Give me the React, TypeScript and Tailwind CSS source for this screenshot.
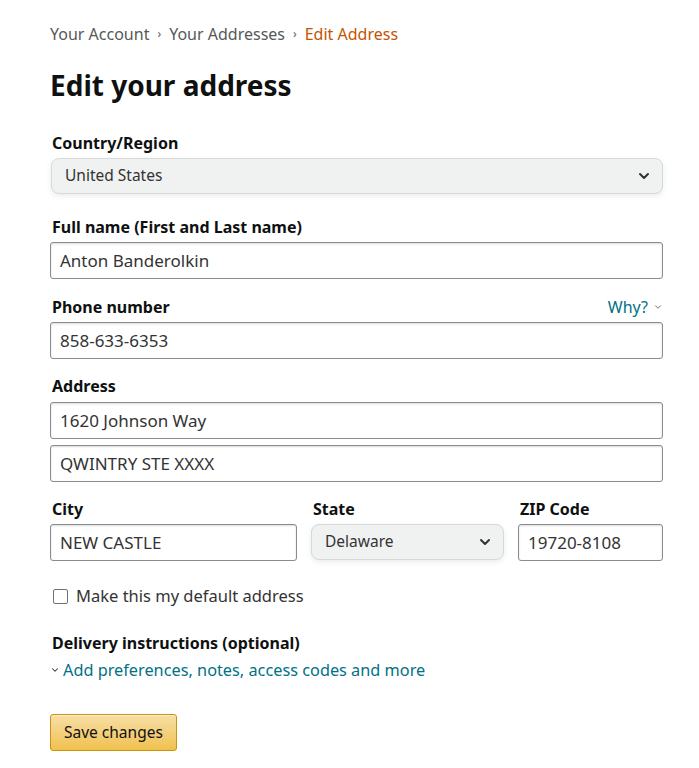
import { ChevronDown } from "lucide-react";

const font = "font-['Noto_Sans',_'Liberation_Sans',_sans-serif]";

function Label({ children }: { children: React.ReactNode }) {
  return (
    <div className="text-[16px] font-bold leading-5 text-[#0f1111] pl-[2px]">{children}</div>
  );
}

function TextBox({ value }: { value: string }) {
  return (
    <div className="flex h-[37px] items-center rounded-[3px] border border-[#888c8c] bg-white px-[9px] text-[17px] text-[#333] shadow-[inset_0_1px_2px_rgba(15,17,17,0.15)]">
      {value}
    </div>
  );
}

function SelectBox({ value }: { value: string }) {
  return (
    <div className="flex h-[36px] items-center justify-between rounded-lg border border-[#d5d9d9] bg-[#f0f2f2] pl-[13px] pr-[10px] text-[15.5px] text-[#333] shadow-[0_2px_5px_rgba(213,217,217,0.5)]">
      <span>{value}</span>
      <ChevronDown size={16} strokeWidth={3} className="text-[#333]" />
    </div>
  );
}

export default function App() {
  return (
    <div className={`${font} min-h-[768px] bg-white px-[50px] pt-[24px] text-[#0f1111]`}>
      {/* Breadcrumb */}
      <nav className="flex items-center text-[16px] leading-5 text-[#565959]">
        <span>Your Account</span>
        <span className="mx-[8px] text-[12px]">›</span>
        <span>Your Addresses</span>
        <span className="mx-[8px] text-[12px]">›</span>
        <span className="text-[#c45500]">Edit Address</span>
      </nav>

      <h1 className="mt-[25px] text-[28px] font-bold leading-8">Edit your address</h1>

      <div className="mt-[32px] w-[613px]">
        <Label>Country/Region</Label>
        <div className="mt-[5px] pl-[1px]">
          <SelectBox value="United States" />
        </div>

        <div className="mt-[23px]">
          <Label>Full name (First and Last name)</Label>
          <div className="mt-[5px]">
            <TextBox value="Anton Banderolkin" />
          </div>
        </div>

        <div className="mt-[18px]">
          <div className="flex h-5 items-center justify-between">
            <Label>Phone number</Label>
            <span className="flex items-center gap-[5px] text-[16px] leading-5 text-[#007185]">
              Why?
              <ChevronDown size={10} strokeWidth={2} className="text-[#565959]" />
            </span>
          </div>
          <div className="mt-[5px]">
            <TextBox value="858-633-6353" />
          </div>
        </div>

        <div className="mt-[17px]">
          <Label>Address</Label>
          <div className="mt-[6px] flex flex-col gap-[6px]">
            <TextBox value="1620 Johnson Way" />
            <TextBox value="QWINTRY STE XXXX" />
          </div>
        </div>

        <div className="mt-[17px] flex gap-[14px]">
          <div className="w-[247px]">
            <Label>City</Label>
            <div className="mt-[5px]">
              <TextBox value="NEW CASTLE" />
            </div>
          </div>
          <div className="w-[193px]">
            <Label>State</Label>
            <div className="mt-[5px]">
              <SelectBox value="Delaware" />
            </div>
          </div>
          <div className="flex-1">
            <Label>ZIP Code</Label>
            <div className="mt-[5px]">
              <TextBox value="19720-8108" />
            </div>
          </div>
        </div>

        <label className="mt-[23px] flex items-center gap-[8px] pl-[3px] text-[16.5px] leading-6 text-[#333]">
          <span className="h-[15px] w-[15px] rounded-[2px] border border-[#6f7373] bg-white" />
          Make this my default address
        </label>

        <div className="mt-[25px]">
          <Label>Delivery instructions (optional)</Label>
          <div className="mt-[5px] flex items-center gap-[3px] text-[16.3px] leading-6 text-[#007185]">
            <ChevronDown size={10} strokeWidth={2.5} className="text-[#333]" />
            Add preferences, notes, access codes and more
          </div>
        </div>

        <button className="mt-[32px] flex h-[37px] items-center rounded-[3px] border border-[#c89411] bg-gradient-to-b from-[#f7dfa5] to-[#f0c14b] px-[13px] text-[15.5px] text-[#111] shadow-[inset_0_1px_0_rgba(255,255,255,0.4)]">
          Save changes
        </button>
      </div>
    </div>
  );
}
